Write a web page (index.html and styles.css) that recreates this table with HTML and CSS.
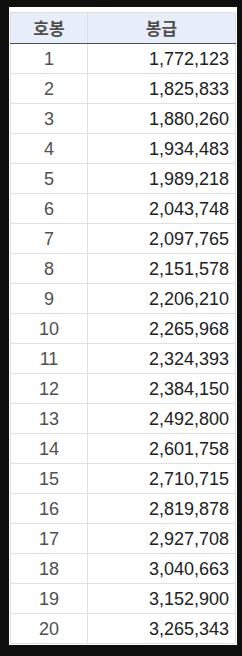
FILE: index.html
```html
<!DOCTYPE html>
<html lang="ko">
<head>
<meta charset="utf-8">
<link rel="stylesheet" href="styles.css">
</head>
<body>
<div class="sheet">
<table class="pay">
<thead>
<tr><th class="c1">호봉</th><th class="c2">봉급</th></tr>
</thead>
<tbody>
<tr><td class="c1">1</td><td class="c2">1,772,123</td></tr>
<tr><td class="c1">2</td><td class="c2">1,825,833</td></tr>
<tr><td class="c1">3</td><td class="c2">1,880,260</td></tr>
<tr><td class="c1">4</td><td class="c2">1,934,483</td></tr>
<tr><td class="c1">5</td><td class="c2">1,989,218</td></tr>
<tr><td class="c1">6</td><td class="c2">2,043,748</td></tr>
<tr><td class="c1">7</td><td class="c2">2,097,765</td></tr>
<tr><td class="c1">8</td><td class="c2">2,151,578</td></tr>
<tr><td class="c1">9</td><td class="c2">2,206,210</td></tr>
<tr><td class="c1">10</td><td class="c2">2,265,968</td></tr>
<tr><td class="c1">11</td><td class="c2">2,324,393</td></tr>
<tr><td class="c1">12</td><td class="c2">2,384,150</td></tr>
<tr><td class="c1">13</td><td class="c2">2,492,800</td></tr>
<tr><td class="c1">14</td><td class="c2">2,601,758</td></tr>
<tr><td class="c1">15</td><td class="c2">2,710,715</td></tr>
<tr><td class="c1">16</td><td class="c2">2,819,878</td></tr>
<tr><td class="c1">17</td><td class="c2">2,927,708</td></tr>
<tr><td class="c1">18</td><td class="c2">3,040,663</td></tr>
<tr><td class="c1">19</td><td class="c2">3,152,900</td></tr>
<tr><td class="c1">20</td><td class="c2">3,265,343</td></tr>
</tbody>
</table>
</div>
</body>
</html>
```
FILE: styles.css
```css
html, body {
  margin: 0;
  padding: 0;
  background: #0f0f0f;
}
body {
  padding: 7px 0 0 9px;
}
.sheet {
  width: 228px;
  background: #ffffff;
  padding: 5px 0 1px 1px;
  box-sizing: border-box;
}
.pay {
  border-collapse: collapse;
  table-layout: fixed;
  width: 226px;
  font-family: "Liberation Sans", Arial, "Noto Sans CJK KR", sans-serif;
  font-size: 18px;
}
.pay th, .pay td {
  border: 1px solid #e0e0e0;
  height: 30px;
  padding: 0 6px;
  box-sizing: border-box;
  line-height: 20px;
}
.pay th {
  background: #e8eef9;
  color: #505050;
  font-family: "Noto Sans CJK KR", sans-serif;
  font-weight: 700;
  font-size: 17px;
  height: 31px;
  border-bottom: 1px solid #4c525b;
}
.pay th.c1 { width: 77px; }
.pay td.c1 {
  text-align: center;
  color: #505050;
}
.pay td.c2 {
  text-align: right;
  color: #222222;
}
```
